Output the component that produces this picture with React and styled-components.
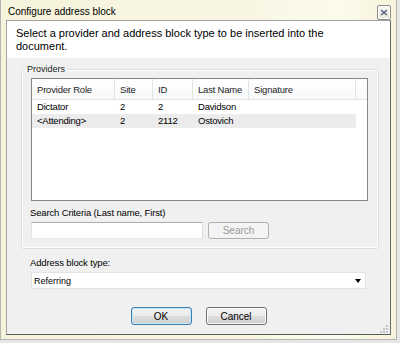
import React from "react";
import styled, { createGlobalStyle } from "styled-components";

const columns = [
  { key: "role", title: "Provider Role", width: 83 },
  { key: "site", title: "Site", width: 38 },
  { key: "id", title: "ID", width: 40 },
  { key: "last", title: "Last Name", width: 56 },
  { key: "sig", title: "Signature", width: 107 },
];

const providers = [
  { role: "Dictator", site: "2", id: "2", last: "Davidson", sig: "" },
  { role: "<Attending>", site: "2", id: "2112", last: "Ostovich", sig: "" },
];

export default function App() {
  return (
    <>
      <GlobalStyle />
      <Screen>
        <Window>
          <TitleBar>
            <Title>Configure address block</Title>
            <CloseButton aria-label="Close">
              <svg width="8" height="7" viewBox="0 0 8 7">
                <path d="M1 1 L7 6 M7 1 L1 6" stroke="#56657f" strokeWidth="1.6" />
              </svg>
            </CloseButton>
          </TitleBar>
          <Frame>
            <Intro>
              Select a provider and address block type to be inserted into the document.
            </Intro>
            <Body>
              <GroupBox>
                <Legend>Providers</Legend>
                <ListView>
                  <HeaderRow>
                    {columns.map((c) => (
                      <HeaderCell key={c.key} $w={c.width}>
                        {c.title}
                      </HeaderCell>
                    ))}
                    <HeaderFiller />
                  </HeaderRow>
                  {providers.map((p, i) => (
                    <Row key={p.id} $shaded={i === 1}>
                      {columns.map((c) => (
                        <Cell key={c.key} $w={c.width}>
                          {p[c.key]}
                        </Cell>
                      ))}
                    </Row>
                  ))}
                </ListView>
                <FieldLabel>Search Criteria (Last name, First)</FieldLabel>
                <SearchRow>
                  <TextBox type="text" />
                  <Button type="button" disabled>
                    Search
                  </Button>
                </SearchRow>
              </GroupBox>
              <BlockLabel>Address block type:</BlockLabel>
              <Select>
                <span>Referring</span>
                <Arrow />
              </Select>
              <ButtonRow>
                <Button type="button" $default>
                  OK
                </Button>
                <Button type="button">Cancel</Button>
              </ButtonRow>
            </Body>
            <Grip viewBox="0 0 8 8" width="8" height="8">
              <rect x="6" y="0" width="2" height="2" fill="#c4c4c4" />
              <rect x="3" y="3" width="2" height="2" fill="#c4c4c4" />
              <rect x="6" y="3" width="2" height="2" fill="#c4c4c4" />
              <rect x="0" y="6" width="2" height="2" fill="#c4c4c4" />
              <rect x="3" y="6" width="2" height="2" fill="#c4c4c4" />
              <rect x="6" y="6" width="2" height="2" fill="#c4c4c4" />
            </Grip>
          </Frame>
        </Window>
      </Screen>
    </>
  );
}

const GlobalStyle = createGlobalStyle`
  * { box-sizing: border-box; }
  body {
    margin: 0;
    background: #e6e6e6;
    font-family: "Liberation Sans", Arial, sans-serif;
    color: #000;
  }
`;

const Screen = styled.div`
  width: 400px;
  height: 343px;
  background: #e6e6e6;
  overflow: hidden;
`;

const Window = styled.div`
  width: 397px;
  height: 340px;
  display: flex;
  flex-direction: column;
  padding: 0 5px 4px 5px;
  border: 1px solid #b4b4b4;
  border-top: none;
  background: linear-gradient(90deg, #f6f3dc 0%, #f8f6e2 60%, #fcfbec 85%, #f6f3dc 100%);
`;

const TitleBar = styled.div`
  height: 20px;
  display: flex;
  align-items: flex-end;
  justify-content: space-between;
`;

const Title = styled.div`
  align-self: center;
  margin-left: 2px;
  margin-top: 3px;
  font-size: 10px;
  line-height: 12px;
`;

const CloseButton = styled.button`
  width: 14px;
  height: 15px;
  padding: 0;
  display: flex;
  align-items: center;
  justify-content: center;
  border: 1px solid #8e8e8e;
  border-radius: 2px;
  background: linear-gradient(#fbfbf5, #e9e8dc);
  box-shadow: inset 0 0 0 1px #ffffff;
`;

const Frame = styled.div`
  position: relative;
  height: 315px;
  display: flex;
  flex-direction: column;
  border: 1px solid;
  border-color: #a2a2a2 #6a6a6a #5c5c5c #a2a2a2;
  background: #f0f0f0;
`;

const Intro = styled.div`
  height: 37px;
  padding: 6px 40px 0 9px;
  background: #ffffff;
  font-size: 11px;
  line-height: 13px;
`;

const Body = styled.div`
  flex: 1;
  display: flex;
  flex-direction: column;
  padding: 5px 0 0 14px;
`;

const GroupBox = styled.fieldset`
  width: 358px;
  margin: 0;
  padding: 3px 10px 9px 9px;
  border: 1px solid #d5dfe5;
  border-radius: 3px;
  box-shadow: inset 0 0 0 1px #ffffff;
  min-width: 0;
`;

const Legend = styled.legend`
  margin-left: -6px;
  padding: 0 2px;
  font-size: 9px;
  line-height: 12px;
  color: #1a1a1a;
`;

const ListView = styled.div`
  width: 337px;
  height: 123px;
  border: 1px solid #828790;
  background: #ffffff;
  font-size: 9.5px;
  letter-spacing: -0.2px;
`;

const HeaderRow = styled.div`
  display: flex;
  height: 21px;
  border-bottom: 1px solid #e5e5e5;
  background: linear-gradient(#ffffff, #f7f8f9);
`;

const HeaderCell = styled.div`
  width: ${(p) => p.$w}px;
  flex: none;
  display: flex;
  align-items: center;
  padding-left: 5px;
  border-right: 1px solid #e2e3e4;
  color: #1e1e1e;
  white-space: nowrap;
`;

const HeaderFiller = styled.div`
  flex: 1;
`;

const Row = styled.div`
  display: flex;
  height: 14px;
  width: 324px;
  background: ${(p) => (p.$shaded ? "#ececec" : "transparent")};
`;

const Cell = styled.div`
  width: ${(p) => p.$w}px;
  flex: none;
  padding-left: 5px;
  line-height: 14px;
  white-space: nowrap;
`;

const FieldLabel = styled.div`
  margin-top: 6px;
  margin-left: -1px;
  font-size: 9.5px;
  line-height: 12px;
  letter-spacing: -0.15px;
`;

const SearchRow = styled.div`
  display: flex;
  gap: 5px;
  margin-top: 3px;
`;

const TextBox = styled.input`
  width: 172px;
  height: 17px;
  margin: 0;
  border: 1px solid;
  border-color: #abadb3 #dbdfe6 #e3e9ef #e2e3ea;
  background: #ffffff;
  outline: none;
`;

const Button = styled.button`
  width: 61px;
  height: ${(p) => (p.disabled ? 17 : 18)}px;
  padding: 0;
  font-family: "Liberation Sans", Arial, sans-serif;
  font-size: 10px;
  color: #000;
  border: 1px solid ${(p) => (p.$default ? "#3c7fb1" : "#707070")};
  border-radius: 3px;
  background: linear-gradient(#f2f2f2 0%, #ebebeb 50%, #dddddd 51%, #cfcfcf 100%);
  box-shadow: inset 0 0 0 1px ${(p) => (p.$default ? "#bfe8fb" : "#fbfbfb")};

  &:disabled {
    color: #9a9a9a;
    border-color: #adb2b5;
    background: #f4f4f4;
    box-shadow: none;
  }
`;

const BlockLabel = styled.div`
  margin-top: 8px;
  margin-left: 9px;
  font-size: 9.5px;
  line-height: 12px;
  letter-spacing: -0.15px;
`;

const Select = styled.div`
  width: 335px;
  height: 17px;
  margin-top: 3px;
  margin-left: 10px;
  display: flex;
  align-items: center;
  justify-content: space-between;
  padding: 0 4px 0 2px;
  border: 1px solid #e3e3e6;
  background: #ffffff;
  font-size: 9px;
`;

const Arrow = styled.span`
  width: 0;
  height: 0;
  border-left: 3.5px solid transparent;
  border-right: 3.5px solid transparent;
  border-top: 4px solid #000;
`;

const ButtonRow = styled.div`
  display: flex;
  justify-content: center;
  gap: 14px;
  margin-top: 18px;
  margin-left: -14px;
`;

const Grip = styled.svg`
  position: absolute;
  right: 2px;
  bottom: 1px;
`;
